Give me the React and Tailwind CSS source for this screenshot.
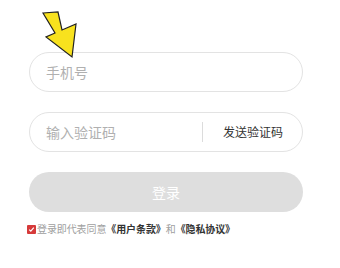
export default function App() {
  const font = { fontFamily: '"Noto Sans CJK SC", "Noto Sans", sans-serif' };
  return (
    <div className="relative w-[340px] h-[268px] bg-white overflow-hidden" style={font}>
      <svg className="absolute left-0 top-0" width="90" height="65" viewBox="0 0 90 65">
        <polygon
          points="43,13 58,12 62,30 76,24 72,57 46,37 55,33"
          fill="#f8e21e"
          stroke="#222"
          strokeWidth="1.2"
          strokeLinejoin="miter"
        />
      </svg>
      <div className="ml-[29px] w-[274px] pt-[52px] flex flex-col gap-[20px]">
        <div className="h-[40px] rounded-full border border-[#e3e3e3] flex items-center pl-[16px]">
          <span className="text-[14px] text-[#b0b0b0]">手机号</span>
        </div>
        <div className="h-[40px] rounded-full border border-[#e3e3e3] flex items-center pl-[16px] pr-[19px]">
          <span className="text-[14px] text-[#b0b0b0] flex-1">输入验证码</span>
          <div className="w-px h-[20px] bg-[#dcdcdc] mr-[20px]"></div>
          <span className="text-[12px] text-[#333]">发送验证码</span>
        </div>
        <div className="h-[40px] rounded-full bg-[#dedede] flex items-center justify-center">
          <span className="text-[14px] text-white">登录</span>
        </div>
      </div>
      <div className="ml-[27px] mt-[11px] flex items-center">
        <div className="w-[9px] h-[9px] bg-[#d63a3a] rounded-[1px] flex items-center justify-center">
          <svg width="7" height="7" viewBox="0 0 7 7">
            <path d="M1.2 3.6 L2.8 5.1 L5.8 1.6" fill="none" stroke="#fff" strokeWidth="1.2" />
          </svg>
        </div>
        <span className="text-[10px] leading-[12px] text-[#a0a0a0] ml-px tracking-[-0.1px]">
          登录即代表同意<span className="font-bold text-[#333]">《用户条款》</span>和<span className="font-bold text-[#333]">《隐私协议》</span>
        </span>
      </div>
    </div>
  );
}
